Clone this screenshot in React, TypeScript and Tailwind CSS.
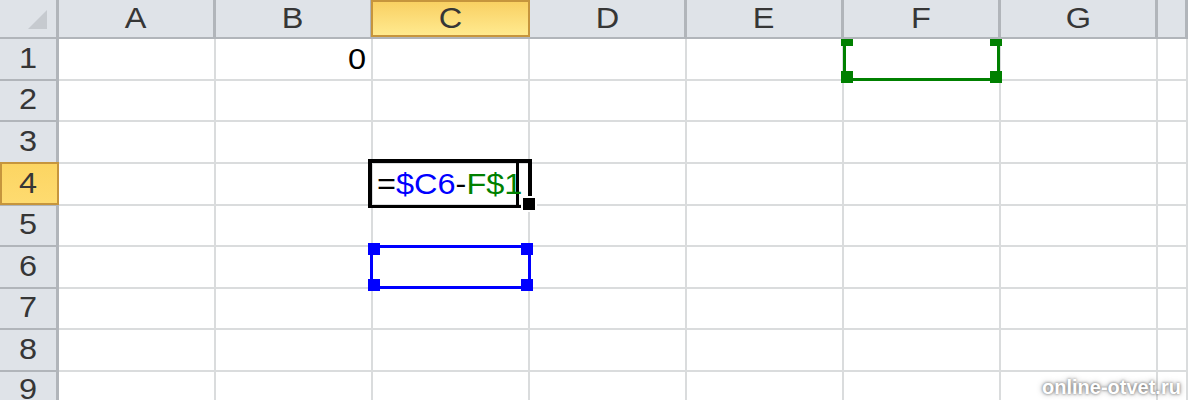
import React from "react";

const COLS = ["A", "B", "C", "D", "E", "F", "G", ""];
const ROWS = [1, 2, 3, 4, 5, 6, 7, 8, 9];

const headBorder = "border-[#b1b5ba]";
const gridBorder = "border-[#dadcdd]";

function Label({ children }: { children: React.ReactNode }) {
  return (
    <span className="relative z-20 inline-block origin-center scale-x-[1.12] text-[29px] leading-[33px]">
      {children}
    </span>
  );
}

function Corner() {
  return (
    <div className={`relative border-r-[3px] border-b-2 ${headBorder} bg-[#dfe3e8]`}>
      <svg className="absolute left-[28px] top-[10px]" width="19" height="19" viewBox="0 0 19 19">
        <polygon points="19,0 19,19 0,19" fill="#c6cacf" />
      </svg>
    </div>
  );
}

function ColHead({ name, active }: { name: string; active: boolean }) {
  return (
    <div
      className={`relative flex items-center justify-center border-r-[3px] border-b-2 ${headBorder} bg-[#dfe3e8] text-[#363636]`}
    >
      {active && (
        <div className="absolute z-10 -left-[2px] -right-[3px] top-0 bottom-0 border-2 border-[#c6953d] bg-linear-to-b from-[#f9d062] to-[#ffea8f]" />
      )}
      {name && <Label>{name}</Label>}
    </div>
  );
}

function RowHead({ n, active }: { n: number; active: boolean }) {
  return (
    <div
      className={`relative flex items-end justify-center pb-[4px] border-r-[3px] border-b-2 ${headBorder} bg-[#dfe3e8] text-[#363636]`}
    >
      {active && (
        <div className="absolute z-10 left-0 -right-[3px] -top-[2px] -bottom-[1px] border-2 border-[#c6953d] bg-linear-to-b from-[#fcd562] to-[#fedb70]" />
      )}
      <Label>{n}</Label>
    </div>
  );
}

function Handle({ pos, color }: { pos: string; color: string }) {
  return <div className={`absolute h-[12px] w-[12px] ${pos} ${color}`} />;
}

function Formula() {
  return (
    <div className="relative z-10 h-full">
      {/* selection frame of the cell being edited */}
      <div className="absolute -left-[5px] -top-[5px] -right-[4px] -bottom-[4px] border-[4px] border-b-[3px] border-black" />
      {/* text caret */}
      <div className="absolute left-[143px] -top-[2px] -bottom-[1px] w-[3px] bg-black" />
      {/* fill handle */}
      <div className="absolute left-[148px] top-[32px] h-[16px] w-[16px] border-2 border-white bg-black" />
      <div className="flex h-full items-end pb-[3px] pl-[4px]">
        <span className="inline-block origin-left scale-x-[1.12] text-[29px] leading-[33px] text-black">
          =<span className="text-[#0000ff]">$C6</span>-<span className="text-[#008000]">F$1</span>
        </span>
      </div>
    </div>
  );
}

function BlueRange() {
  return (
    <div className="absolute z-10 -left-[3px] -top-[2px] -right-[3px] -bottom-[2px] border-[3px] border-[#0000ff]">
      <Handle pos="-left-[5px] -top-[5px]" color="bg-[#0000ff]" />
      <Handle pos="-right-[5px] -top-[5px]" color="bg-[#0000ff]" />
      <Handle pos="-left-[5px] -bottom-[5px]" color="bg-[#0000ff]" />
      <Handle pos="-right-[5px] -bottom-[5px]" color="bg-[#0000ff]" />
    </div>
  );
}

function GreenRange() {
  return (
    <div className="absolute z-10 -left-[1px] top-0 -right-[1px] -bottom-[2px] border-x-[3px] border-b-[3px] border-[#008000]">
      <div className="absolute -left-[5px] top-0 h-[7px] w-[12px] bg-[#008000]" />
      <div className="absolute -right-[5px] top-0 h-[7px] w-[12px] bg-[#008000]" />
      <Handle pos="-left-[5px] -bottom-[5px]" color="bg-[#008000]" />
      <Handle pos="-right-[5px] -bottom-[5px]" color="bg-[#008000]" />
    </div>
  );
}

function Cell({ col, row }: { col: string; row: number }) {
  const ref = `${col}${row}`;
  return (
    <div className={`relative border-r-2 border-b-2 ${gridBorder}`}>
      {ref === "B1" && (
        <div className="flex h-full items-end justify-end pb-[3px] pr-[5px]">
          <span className="inline-block origin-right scale-x-[1.12] text-[29px] leading-[33px] text-black">0</span>
        </div>
      )}
      {ref === "C4" && <Formula />}
      {ref === "C6" && <BlueRange />}
      {ref === "F1" && <GreenRange />}
    </div>
  );
}

export default function App() {
  return (
    <div className="relative h-[400px] w-[1188px] overflow-hidden bg-white font-['Liberation_Sans',Arial,sans-serif]">
      <div className="grid grid-cols-[59px_repeat(7,157px)_1fr] grid-rows-[39px_42px_41px_42px_42px_41px_42px_41px_42px_40px]">
        <Corner />
        {COLS.map((c) => (
          <ColHead key={`h-${c || "H"}`} name={c} active={c === "C"} />
        ))}
        {ROWS.map((r) => (
          <React.Fragment key={r}>
            <RowHead n={r} active={r === 4} />
            {COLS.map((c) => (
              <Cell key={`${c || "H"}${r}`} col={c || "H"} row={r} />
            ))}
          </React.Fragment>
        ))}
      </div>
      <div className="absolute z-30 left-[1042px] top-[376px] text-[20px] font-bold leading-[23px] text-white [text-shadow:0_0_3px_rgba(0,0,0,0.55),0_0_6px_rgba(0,0,0,0.35)]">
        online-otvet.ru
      </div>
    </div>
  );
}
